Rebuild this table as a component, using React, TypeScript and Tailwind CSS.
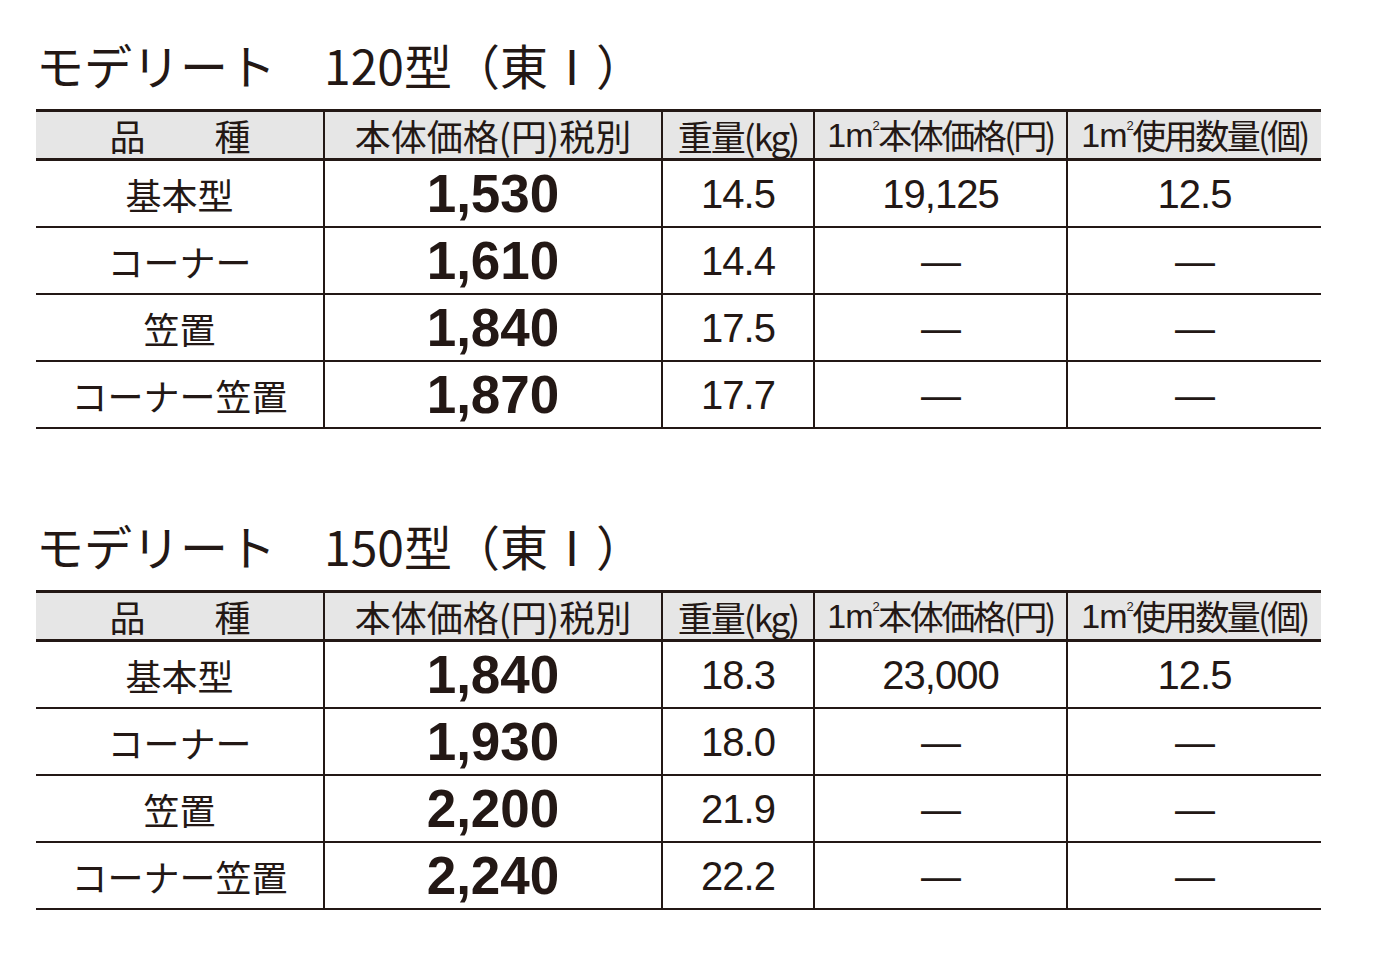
import React from 'react';

type Row = {
  name: string;
  price: string;
  weight: string;
  perM2Price: string;
  perM2Count: string;
};

type Block = {
  title: string;
  rows: Row[];
};

const blocks: Block[] = [
  {
    title: '120型',
    rows: [
      { name: '基本型', price: '1,530', weight: '14.5', perM2Price: '19,125', perM2Count: '12.5' },
      { name: 'コーナー', price: '1,610', weight: '14.4', perM2Price: '—', perM2Count: '—' },
      { name: '笠置', price: '1,840', weight: '17.5', perM2Price: '—', perM2Count: '—' },
      { name: 'コーナー笠置', price: '1,870', weight: '17.7', perM2Price: '—', perM2Count: '—' },
    ],
  },
  {
    title: '150型',
    rows: [
      { name: '基本型', price: '1,840', weight: '18.3', perM2Price: '23,000', perM2Count: '12.5' },
      { name: 'コーナー', price: '1,930', weight: '18.0', perM2Price: '—', perM2Count: '—' },
      { name: '笠置', price: '2,200', weight: '21.9', perM2Price: '—', perM2Count: '—' },
      { name: 'コーナー笠置', price: '2,240', weight: '22.2', perM2Price: '—', perM2Count: '—' },
    ],
  },
];

const jp = "font-['Noto_Sans_CJK_JP',sans-serif]";
const num = "font-['Liberation_Sans','Noto_Sans_CJK_JP',sans-serif]";

// column widths incl. the 2px left divider on columns 2-5
const cols = ['w-[287px]', 'w-[338px] border-l-2', 'w-[152px] border-l-2', 'w-[253px] border-l-2', 'w-[255px] border-l-2'];

const M2 = () => (
  <span className="inline-flex items-start mr-[1px]">
    <span className={`${num} tracking-[-1px]`}>1m</span>
    <span className={`${num} text-[13px] leading-none mt-[1px]`}>2</span>
  </span>
);

const HeaderRow = () => {
  const labels: React.ReactNode[] = [
    '品　　種',
    '本体価格(円)税別',
    '重量(kg)',
    <>
      <M2 />本体価格(円)
    </>,
    <>
      <M2 />使用数量(個)
    </>,
  ];
  const size = ['text-[36px] tracking-[-1px]', 'text-[36px] tracking-[0px]', 'text-[35px] tracking-[-2px]', 'text-[34px] tracking-[-2.5px]', 'text-[34px] tracking-[-2.5px]'];
  return (
    <div className="flex h-[52px] border-y-[3px] border-[#231815] bg-[#e6e6e6]">
      {labels.map((label, i) => (
        <div
          key={i}
          className={`${cols[i]} border-[#231815] flex items-center justify-center whitespace-nowrap ${jp} ${size[i]} leading-none text-[#231815]`}
        >
          {label}
        </div>
      ))}
    </div>
  );
};

const DataRow = ({ row }: { row: Row }) => (
  <div className="flex h-[67px] border-b-2 border-[#231815] text-[#231815]">
    <div className={`${cols[0]} flex items-center justify-center ${jp} text-[36px] leading-none`}>{row.name}</div>
    <div className={`${cols[1]} border-[#231815] flex items-center justify-center ${num} text-[53px] font-bold leading-none`}>
      {row.price}
    </div>
    <div className={`${cols[2]} border-[#231815] flex items-center justify-center ${num} text-[40px] leading-none tracking-[-1px]`}>
      {row.weight}
    </div>
    <div className={`${cols[3]} border-[#231815] flex items-center justify-center ${num} text-[40px] leading-none tracking-[-1px]`}>
      {row.perM2Price}
    </div>
    <div className={`${cols[4]} border-[#231815] flex items-center justify-center ${num} text-[40px] leading-none tracking-[-1px]`}>
      {row.perM2Count}
    </div>
  </div>
);

const PriceTable = ({ block }: { block: Block }) => (
  <section>
    <h2 className={`h-[52px] pb-[6px] flex items-center ${jp} text-[48px] font-normal leading-none text-[#231815] whitespace-nowrap`}>
      モデリート　{block.title}（東Ⅰ）
    </h2>
    <div className="mt-[16px] w-[1285px]">
      <HeaderRow />
      {block.rows.map((row) => (
        <DataRow key={row.name} row={row} />
      ))}
    </div>
  </section>
);

export default function App() {
  return (
    <div className="w-[1374px] h-[966px] bg-white pl-[36px] pt-[41px]">
      <div className="flex flex-col gap-[93px]">
        {blocks.map((block) => (
          <PriceTable key={block.title} block={block} />
        ))}
      </div>
    </div>
  );
}
